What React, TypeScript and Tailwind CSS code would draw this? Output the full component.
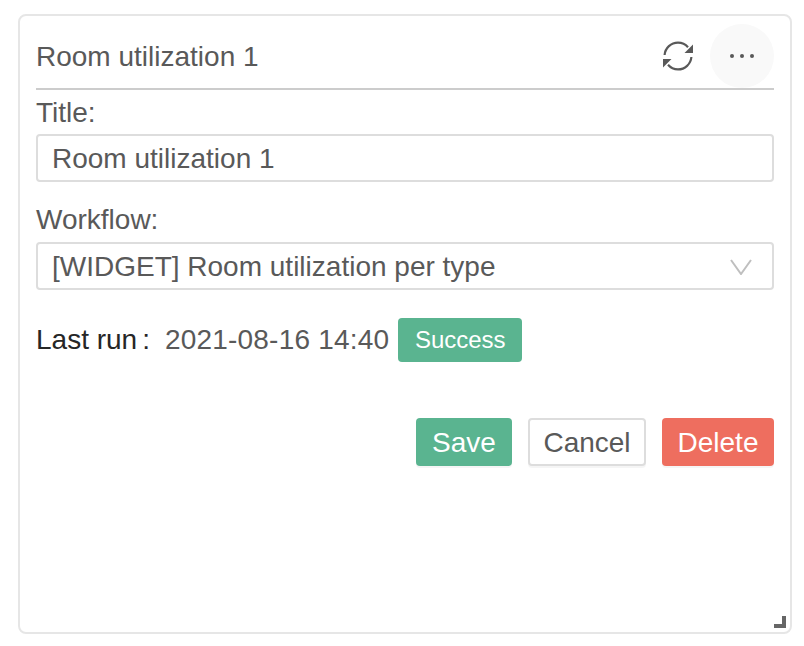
const font = "font-['Liberation_Sans',Arial,sans-serif]";

function RefreshIcon() {
  return (
    <svg width="32" height="32" viewBox="0 0 32 32" fill="none">
      <path d="M2.600 15C3.200 8 9 2.600 16 2.600c4 0 7.500 1.700 10 4.600" stroke="#595959" strokeWidth="2.200" />
      <path d="M29.400 17C28.800 24 23 29.400 16 29.400c-4 0-7.500-1.700-10-4.600" stroke="#595959" strokeWidth="2.200" />
      <path d="M31 4.500v8.500h-8.500z" fill="#595959" />
      <path d="M1 27.500V19h8.500z" fill="#595959" />
    </svg>
  );
}

export default function App() {
  return (
    <div className={`w-[804px] h-[646px] bg-white pt-[14px] pl-[18px] ${font}`}>
      <div className="relative w-[774px] h-[620px] border-2 border-[#e6e6e6] rounded-lg px-4 pt-2 bg-white">
        {/* Header */}
        <div className="flex items-center justify-between h-[66px] border-b-2 border-[#cccccc]">
          <span className="text-[28px] leading-[64px] pt-[2px] text-[#595959]">Room utilization 1</span>
          <div className="flex items-center gap-[16px]">
            <RefreshIcon />
            <button className="w-16 h-16 rounded-full bg-[#f9f9f9] flex items-center justify-center gap-[6px]">
              <span className="w-1 h-1 rounded-full bg-[#595959]" />
              <span className="w-1 h-1 rounded-full bg-[#595959]" />
              <span className="w-1 h-1 rounded-full bg-[#595959]" />
            </button>
          </div>
        </div>

        {/* Form */}
        <div className="text-[28px] leading-[44px] pt-[1px] text-[#595959] h-[44px]">Title:</div>
        <div className="h-12 border-2 border-[#dddddd] rounded px-[14px] pt-[2px] flex items-center text-[28px] text-[#595959]">
          Room utilization 1
        </div>
        <div className="text-[28px] leading-[44px] text-[#595959] h-[44px] mt-4">Workflow:</div>
        <div className="h-12 border-2 border-[#dddddd] rounded pl-[14px] pr-[20px] pt-[1px] flex items-center justify-between text-[28px] text-[#595959]">
          <span>[WIDGET] Room utilization per type</span>
          <svg width="22" height="16" viewBox="0 0 22 16" fill="none" className="text-[#bfbfbf]">
            <path d="M1 1l10 14L21 1" stroke="currentColor" strokeWidth="2" />
          </svg>
        </div>

        {/* Last run */}
        <div className="flex items-center h-11 mt-[28px] text-[28px]">
          <span className="text-[#262626]">Last run</span>
          <span className="text-[#262626] ml-[5px]">:</span>
          <span className="text-[#595959] ml-[15px] tracking-[0.2px]">2021-08-16 14:40</span>
          <span className="ml-[9px] w-[124px] h-11 bg-[#5ab490] text-white text-center rounded text-[24px] leading-[44px]">Success</span>
        </div>

        {/* Actions */}
        <div className="flex justify-end gap-4 mt-[56px]">
          <button className="h-12 w-24 pt-[1px] bg-[#5ab490] text-white text-[28px] rounded shadow-[0_2px_0_rgba(0,0,0,0.04)]">Save</button>
          <button className="h-12 w-[118px] pt-[1px] bg-white border-2 border-[#dddddd] text-[#595959] text-[28px] rounded shadow-[0_2px_0_rgba(0,0,0,0.04)]">Cancel</button>
          <button className="h-12 w-28 pt-[1px] bg-[#ee6e5f] text-white text-[28px] rounded shadow-[0_2px_0_rgba(0,0,0,0.04)]">Delete</button>
        </div>

        {/* Resize handle */}
        <span className="absolute right-[4px] bottom-[4px] w-[12px] h-[12px] border-r-4 border-b-4 border-[#666666]" />
      </div>
    </div>
  );
}
